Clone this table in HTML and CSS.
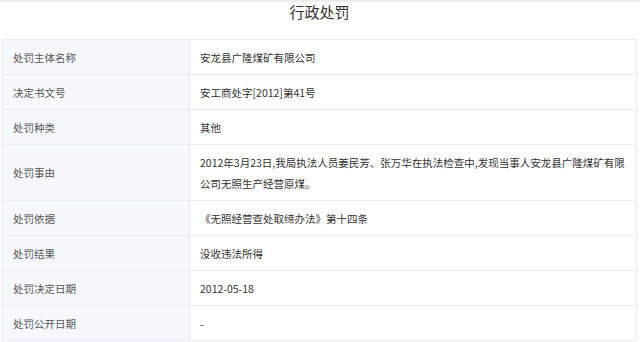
FILE: index.html
```html
<!DOCTYPE html>
<html lang="zh">
<head>
<meta charset="utf-8">
<link rel="stylesheet" href="styles.css">
</head>
<body>
<div class="page">
  <h1 class="title">行政处罚</h1>
  <table class="detail">
    <tr><th>处罚主体名称</th><td>安龙县广隆煤矿有限公司</td></tr>
    <tr><th>决定书文号</th><td>安工商处字[2012]第41号</td></tr>
    <tr><th>处罚种类</th><td>其他</td></tr>
    <tr><th>处罚事由</th><td>2012年3月23日,我局执法人员姜民芳、张万华在执法检查中,发现当事人安龙县广隆煤矿有限公司无照生产经营原煤。</td></tr>
    <tr><th>处罚依据</th><td>《无照经营查处取缔办法》第十四条</td></tr>
    <tr><th>处罚结果</th><td>没收违法所得</td></tr>
    <tr><th>处罚决定日期</th><td>2012-05-18</td></tr>
    <tr><th>处罚公开日期</th><td>-</td></tr>
  </table>
</div>
</body>
</html>
```
FILE: styles.css
```css
html, body {
  margin: 0;
  padding: 0;
  background: #fff;
}
body {
  font-family: "Noto Sans CJK SC", "Noto Sans", sans-serif;
  background: linear-gradient(to bottom, #e6e6e6 0, #f6f6f6 2px, #fff 5px);
}
.page {
  padding: 0 3px 0 2px;
}
.title {
  margin: 0 0 15px 0;
  height: 24px;
  line-height: 24px;
  font-size: 15px;
  font-weight: normal;
  color: #333;
  text-align: center;
}
.detail {
  width: 635px;
  border-collapse: collapse;
  table-layout: fixed;
  font-size: 10.5px;
  line-height: 21px;
}
.detail th,
.detail td {
  border: 1px solid #e6ecf5;
  padding: 6.5px 11px 6.5px 10px;
  text-align: left;
  vertical-align: middle;
  font-weight: normal;
}
.detail th {
  width: 165px;
  background: #f5f8fd;
  color: #555;
}
.detail td {
  color: #333;
}
```
